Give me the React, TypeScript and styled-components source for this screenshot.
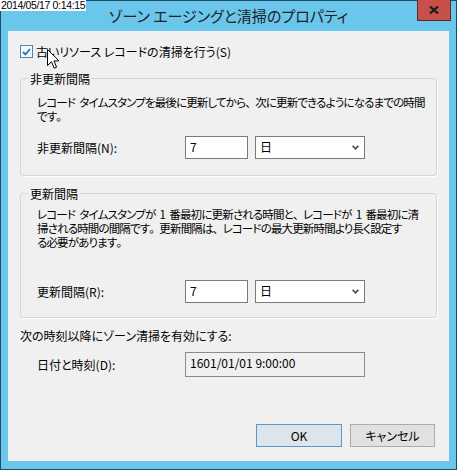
import React from "react";
import styled, { createGlobalStyle } from "styled-components";

const GlobalStyle = createGlobalStyle`
  html, body { margin: 0; padding: 0; background: #6ac6ea; }
  body {
    font-family: "Noto Sans CJK JP", "Noto Sans", sans-serif;
    font-size: 12px;
    color: #000;
  }
  * { box-sizing: border-box; }
`;

const Window = styled.div`
  position: relative;
  width: 457px;
  height: 470px;
  background: #6ac6ea;
  border: 1px solid #1d4d66;
  display: flex;
  flex-direction: column;
  font-feature-settings: "palt";
`;

const TitleBar = styled.div`
  height: 30px;
  flex: none;
  display: grid;
  grid-template-columns: 1fr auto 1fr;
  align-items: start;
`;

const Title = styled.div`
  grid-column: 2;
  font-size: 15px;
  line-height: 30px;
  color: #1c2228;
  white-space: nowrap;
`;

const CloseButton = styled.div`
  grid-column: 3;
  justify-self: end;
  margin: -1px 5px 0 0;
  width: 34px;
  height: 21px;
  background: #c7504b;
  border: 1px solid #5b2b2a;
  border-top: none;
  display: flex;
  align-items: center;
  justify-content: center;
`;

const Stamp = styled.div`
  position: absolute;
  top: -1px;
  left: -1px;
  background: #fff;
  color: #000;
  font-family: "Liberation Sans", Arial, sans-serif;
  font-size: 10.5px;
  line-height: 11px;
  letter-spacing: -0.35px;
  padding: 0 1px;
  font-feature-settings: normal;
`;

const Cursor = styled.svg`
  position: absolute;
  left: 46px;
  top: 48px;
`;

const Client = styled.div`
  flex: 1;
  margin: 0 7px 8px;
  background: #f0f0f0;
  padding: 0 12px 14px;
  display: flex;
  flex-direction: column;
`;

const CheckRow = styled.label`
  margin-top: 13px;
  height: 15px;
  line-height: 15px;
  display: flex;
  align-items: center;
  gap: 3px;
  white-space: nowrap;
`;

const CheckBox = styled.span`
  width: 13px;
  height: 13px;
  flex: none;
  border: 1px solid #4a86b8;
  background: #f2f8fd;
  display: flex;
  align-items: center;
  justify-content: center;
`;

const Group = styled.fieldset<{ $mt: number }>`
  margin: ${(p) => p.$mt}px 0 0;
  padding: 0;
  min-width: 0;
  border: 1px solid #d6d6d6;
  border-radius: 3px;
  box-shadow: 1px 1px 0 #fff;
`;

const Legend = styled.legend`
  margin-left: 7px;
  padding: 0 2px;
  line-height: 15px;
  font-size: 12px;
`;

const GroupBody = styled.div<{ $pt: number; $pb: number }>`
  padding: ${(p) => p.$pt}px 8px ${(p) => p.$pb}px 16px;
`;

const Desc = styled.p`
  margin: 0;
  font-size: 11.5px;
  line-height: 14px;
  letter-spacing: -0.85px;
  word-spacing: 2.5px;
  white-space: nowrap;
`;

const Punct = styled.span`
  font-feature-settings: normal;
  letter-spacing: -1.5px;
`;

const FieldRow = styled.div<{ $mt: number; $indent?: number }>`
  margin-top: ${(p) => p.$mt}px;
  padding-left: ${(p) => p.$indent ?? 0}px;
  display: flex;
  align-items: center;
  gap: 7px;
`;

const FieldLabel = styled.span`
  width: 141px;
  flex: none;
  line-height: 15px;
  white-space: nowrap;
`;

const NumberInput = styled.input`
  width: 63px;
  height: 23px;
  border: 1px solid #7a7a7a;
  background: #fff;
  font: inherit;
  font-size: 12px;
  font-feature-settings: "palt";
  color: #000;
  padding: 0 4px 3px;
  margin: 0;
  outline: none;
`;

const Combo = styled.div`
  width: 110px;
  height: 23px;
  border: 1px solid #7a7a7a;
  background: #fff;
  display: flex;
  align-items: center;
  justify-content: space-between;
  padding: 0 5px 2px 4px;
  line-height: 17px;
`;

const Chevron = styled.svg`
  margin-top: 2px;
`;

const Plain = styled.div`
  margin-top: 10px;
  line-height: 15px;
  white-space: nowrap;
`;

const DateBox = styled.div`
  width: 180px;
  height: 25px;
  border: 1px solid #8a8a8a;
  background: #f0f0f0;
  padding: 1px 4px 0;
  line-height: 17px;
  white-space: nowrap;
`;

const Footer = styled.div`
  margin-top: auto;
  display: flex;
  justify-content: flex-end;
  gap: 8px;
  padding-right: 2px;
`;

const Button = styled.div<{ $primary?: boolean; $w: number }>`
  width: ${(p) => p.$w}px;
  height: 23px;
  display: flex;
  align-items: center;
  justify-content: center;
  border: 1px solid ${(p) => (p.$primary ? "#5b97c9" : "#adadad")};
  background: ${(p) => (p.$primary ? "#dce4ec" : "#e1e1e1")};
  line-height: 15px;
  padding-bottom: 1px;
`;

function ComboBox() {
  return (
    <Combo>
      <span>日</span>
      <Chevron width="7" height="5" viewBox="0 0 7 5">
        <path d="M0.6 0.8 L3.5 3.8 L6.4 0.8" fill="none" stroke="#444" strokeWidth="1.6" />
      </Chevron>
    </Combo>
  );
}

export default function App() {
  return (
    <>
      <GlobalStyle />
      <Window>
        <TitleBar>
          <Title>ゾーン エージングと清掃のプロパティ</Title>
          <CloseButton>
            <svg width="10" height="8" viewBox="0 0 10 8">
              <path d="M1 0.5 L9 7.5 M9 0.5 L1 7.5" stroke="#1a1a1a" strokeWidth="2.2" />
            </svg>
          </CloseButton>
        </TitleBar>
        <Client>
          <CheckRow>
            <CheckBox>
              <svg width="9" height="8" viewBox="0 0 9 8">
                <path d="M1 4 L3.5 6.5 L8 1" fill="none" stroke="#2a72b0" strokeWidth="1.8" />
              </svg>
            </CheckBox>
            古いリソース レコードの清掃を行う(S)
          </CheckRow>

          <Group $mt={12}>
            <Legend>非更新間隔</Legend>
            <GroupBody $pt={9} $pb={16}>
              <Desc>
                レコード タイムスタンプを最後に更新してから<Punct>、</Punct>次に更新できるようになるまでの時間
                <br />
                です<Punct>。</Punct>
              </Desc>
              <FieldRow $mt={13}>
                <FieldLabel>非更新間隔(N):</FieldLabel>
                <NumberInput readOnly value="7" />
                <ComboBox />
              </FieldRow>
            </GroupBody>
          </Group>

          <Group $mt={10}>
            <Legend>更新間隔</Legend>
            <GroupBody $pt={6} $pb={14}>
              <Desc>
                レコード タイムスタンプが 1 番最初に更新される時間と<Punct>、</Punct>レコードが 1 番最初に清
                <br />
                掃される時間の間隔です<Punct>。</Punct>更新間隔は<Punct>、</Punct>レコードの最大更新時間より長く設定す
                <br />
                る必要があります<Punct>。</Punct>
              </Desc>
              <FieldRow $mt={31}>
                <FieldLabel>更新間隔(R):</FieldLabel>
                <NumberInput readOnly value="7" />
                <ComboBox />
              </FieldRow>
            </GroupBody>
          </Group>

          <Plain>次の時刻以降にゾーン清掃を有効にする:</Plain>
          <FieldRow $mt={9} $indent={17}>
            <FieldLabel>日付と時刻(D):</FieldLabel>
            <DateBox>1601/01/01 9:00:00</DateBox>
          </FieldRow>

          <Footer>
            <Button $primary $w={86}>OK</Button>
            <Button $w={85}>キャンセル</Button>
          </Footer>
        </Client>

        <Stamp>2014/05/17 0:14:15</Stamp>
        <Cursor width="13" height="21" viewBox="0 0 13 21">
          <path
            d="M0.5 0.5 L0.5 16.5 L4.5 12.7 L7.2 19.2 L9.6 18.2 L7 11.9 L12 11.9 Z"
            fill="#fff"
            stroke="#000"
            strokeWidth="1"
            strokeLinejoin="miter"
          />
        </Cursor>
      </Window>
    </>
  );
}
